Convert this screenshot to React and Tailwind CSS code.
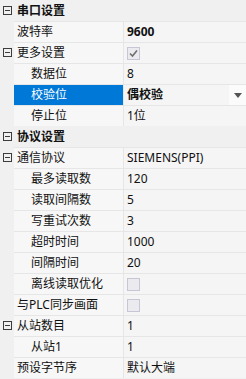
import React from 'react';

// 属性表：分类行 + 属性行
const rows = [
  { type: 'cat', label: '串口设置' },
  { label: '波特率', value: '9600', bold: true },
  { label: '更多设置', expand: true, check: 'on' },
  { label: '数据位', level: 1, value: '8' },
  { label: '校验位', level: 1, value: '偶校验', bold: true, selected: true, dropdown: true },
  { label: '停止位', level: 1, value: '1位' },
  { type: 'cat', label: '协议设置' },
  { label: '通信协议', expand: true, value: 'SIEMENS(PPI)' },
  { label: '最多读取数', level: 1, value: '120' },
  { label: '读取间隔数', level: 1, value: '5' },
  { label: '写重试次数', level: 1, value: '3' },
  { label: '超时时间', level: 1, value: '1000' },
  { label: '间隔时间', level: 1, value: '20' },
  { label: '离线读取优化', level: 1, check: 'off' },
  { label: '与PLC同步画面', check: 'off' },
  { label: '从站数目', expand: true, value: '1' },
  { label: '从站1', level: 1, value: '1' },
  { label: '预设字节序', value: '默认大端' },
];

const Minus = () => (
  <svg width="9" height="9" viewBox="0 0 9 9" className="absolute left-[3px] top-[6px]">
    <rect x="0.5" y="0.5" width="8" height="8" fill="none" stroke="#3c3c3c" />
    <line x1="2" y1="4.5" x2="7" y2="4.5" stroke="#3c3c3c" />
  </svg>
);

const Check = ({ on }) => (
  <div className="w-[13px] h-[13px] border border-[#c6c6d4] bg-[#ebebef] flex items-center justify-center">
    {on && (
      <svg width="9" height="9" viewBox="0 0 9 9">
        <polyline points="1,4.5 3.5,7 8,1.5" fill="none" stroke="#6e6e6e" strokeWidth="1.6" />
      </svg>
    )}
  </div>
);

export default function App() {
  return (
    <div
      className="w-[246px] h-[379px] bg-[#f0f0f0] overflow-hidden text-[12px] text-[#111]"
      style={{ fontFamily: '"Noto Sans", "Noto Sans CJK SC", sans-serif' }}
    >
      {rows.map((r, i) => {
        if (r.type === 'cat') {
          return (
            <div key={i} className="relative h-[21px] flex items-center pl-[17px] font-bold bg-[#f0f0f0]">
              <Minus />
              <span className="leading-none">{r.label}</span>
            </div>
          );
        }
        return (
          <div key={i} className="relative h-[21px] flex">
            <div className="w-[14px] shrink-0 bg-[#f0f0f0]">{r.expand && <Minus />}</div>
            <div className="flex-1 flex border-t border-[#e6e6e6]">
              <div
                className={`w-[110px] shrink-0 border-r border-[#e6e6e6] flex items-center whitespace-nowrap ${
                  r.level ? 'pl-[17px]' : 'pl-[3px]'
                } ${r.selected ? 'bg-[#0078d7] text-white' : 'bg-[#f7f7f7]'}`}
              >
                {r.label}
              </div>
              <div className="flex-1 flex items-center bg-[#f5f5f5] pl-[3px] whitespace-nowrap">
                {r.check ? (
                  <Check on={r.check === 'on'} />
                ) : (
                  <span className={r.bold ? 'font-bold' : ''}>{r.value}</span>
                )}
                {r.dropdown && (
                  <div className="ml-auto w-[17px] self-stretch bg-[#fbfbfb] flex items-center justify-center">
                    <svg width="8" height="5" viewBox="0 0 8 5">
                      <polygon points="0,0 8,0 4,5" fill="#555" />
                    </svg>
                  </div>
                )}
              </div>
            </div>
          </div>
        );
      })}
    </div>
  );
}
